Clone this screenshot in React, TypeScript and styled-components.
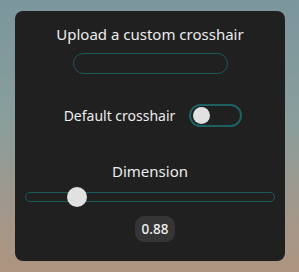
import { useState } from "react";
import styled, { createGlobalStyle } from "styled-components";

const GlobalStyle = createGlobalStyle`
  html, body {
    margin: 0;
    padding: 0;
  }
  body {
    width: 299px;
    height: 272px;
    overflow: hidden;
    font-family: "Noto Sans", "Open Sans", sans-serif;
    background: linear-gradient(180deg, #7b969d 0%, #8a9e9c 45%, #a4978a 80%, #ad9580 100%);
  }
`;

const Page = styled.div`
  padding: 11px 14px 0 15px;
`;

const Card = styled.div`
  box-sizing: border-box;
  width: 270px;
  height: 250px;
  background: #202020;
  border-radius: 8px;
  display: flex;
  flex-direction: column;
  align-items: center;
  padding: 13px 10px 0;
  color: #ececec;
`;

const Title = styled.div`
  font-size: 15px;
  line-height: 20px;
`;

const FileInput = styled.div`
  box-sizing: border-box;
  width: 155px;
  height: 21px;
  margin-top: 9px;
  border: 1px solid #1d5a5c;
  border-radius: 11px;
`;

const Row = styled.div`
  display: flex;
  align-items: center;
  gap: 14px;
  margin-top: 30px;
  margin-left: 6px;
`;

const Label = styled.span`
  font-size: 14px;
  line-height: 20px;
`;

const Switch = styled.button<{ $on: boolean }>`
  box-sizing: border-box;
  width: 53px;
  height: 23px;
  padding: 1px 2px;
  border: 2px solid #1e5f60;
  border-radius: 12px;
  background: transparent;
  display: flex;
  align-items: center;
  justify-content: ${(p) => (p.$on ? "flex-end" : "flex-start")};
  cursor: pointer;
`;

const Knob = styled.span`
  width: 17px;
  height: 17px;
  border-radius: 50%;
  background: #e1e1e1;
`;

const SubTitle = styled.div`
  font-size: 15px;
  line-height: 20px;
  margin-top: 34px;
`;

const Track = styled.div`
  position: relative;
  box-sizing: border-box;
  width: 250px;
  height: 10px;
  margin-top: 11px;
  border: 1px solid #1d5a5c;
  border-radius: 5px;
`;

const Thumb = styled.span`
  position: absolute;
  top: 50%;
  width: 20px;
  height: 20px;
  margin-left: -10px;
  transform: translateY(-50%);
  border-radius: 50%;
  background: #e1e1e1;
`;

const Value = styled.div`
  margin-top: 14px;
  margin-left: 10px;
  width: 40px;
  height: 26px;
  border-radius: 9px;
  background: #353535;
  display: flex;
  align-items: center;
  justify-content: center;
  font-size: 13.5px;
  font-weight: 500;
  color: #f0f0f0;
`;

export default function App() {
  const [on, setOn] = useState(false);
  const value = 0.88;
  const pos = 51; // thumb centre in px along the track

  return (
    <>
      <GlobalStyle />
      <Page>
        <Card>
          <Title>Upload a custom crosshair</Title>
          <FileInput />
          <Row>
            <Label>Default crosshair</Label>
            <Switch $on={on} onClick={() => setOn(!on)}>
              <Knob />
            </Switch>
          </Row>
          <SubTitle>Dimension</SubTitle>
          <Track>
            <Thumb style={{ left: pos }} />
          </Track>
          <Value>{value.toFixed(2)}</Value>
        </Card>
      </Page>
    </>
  );
}
